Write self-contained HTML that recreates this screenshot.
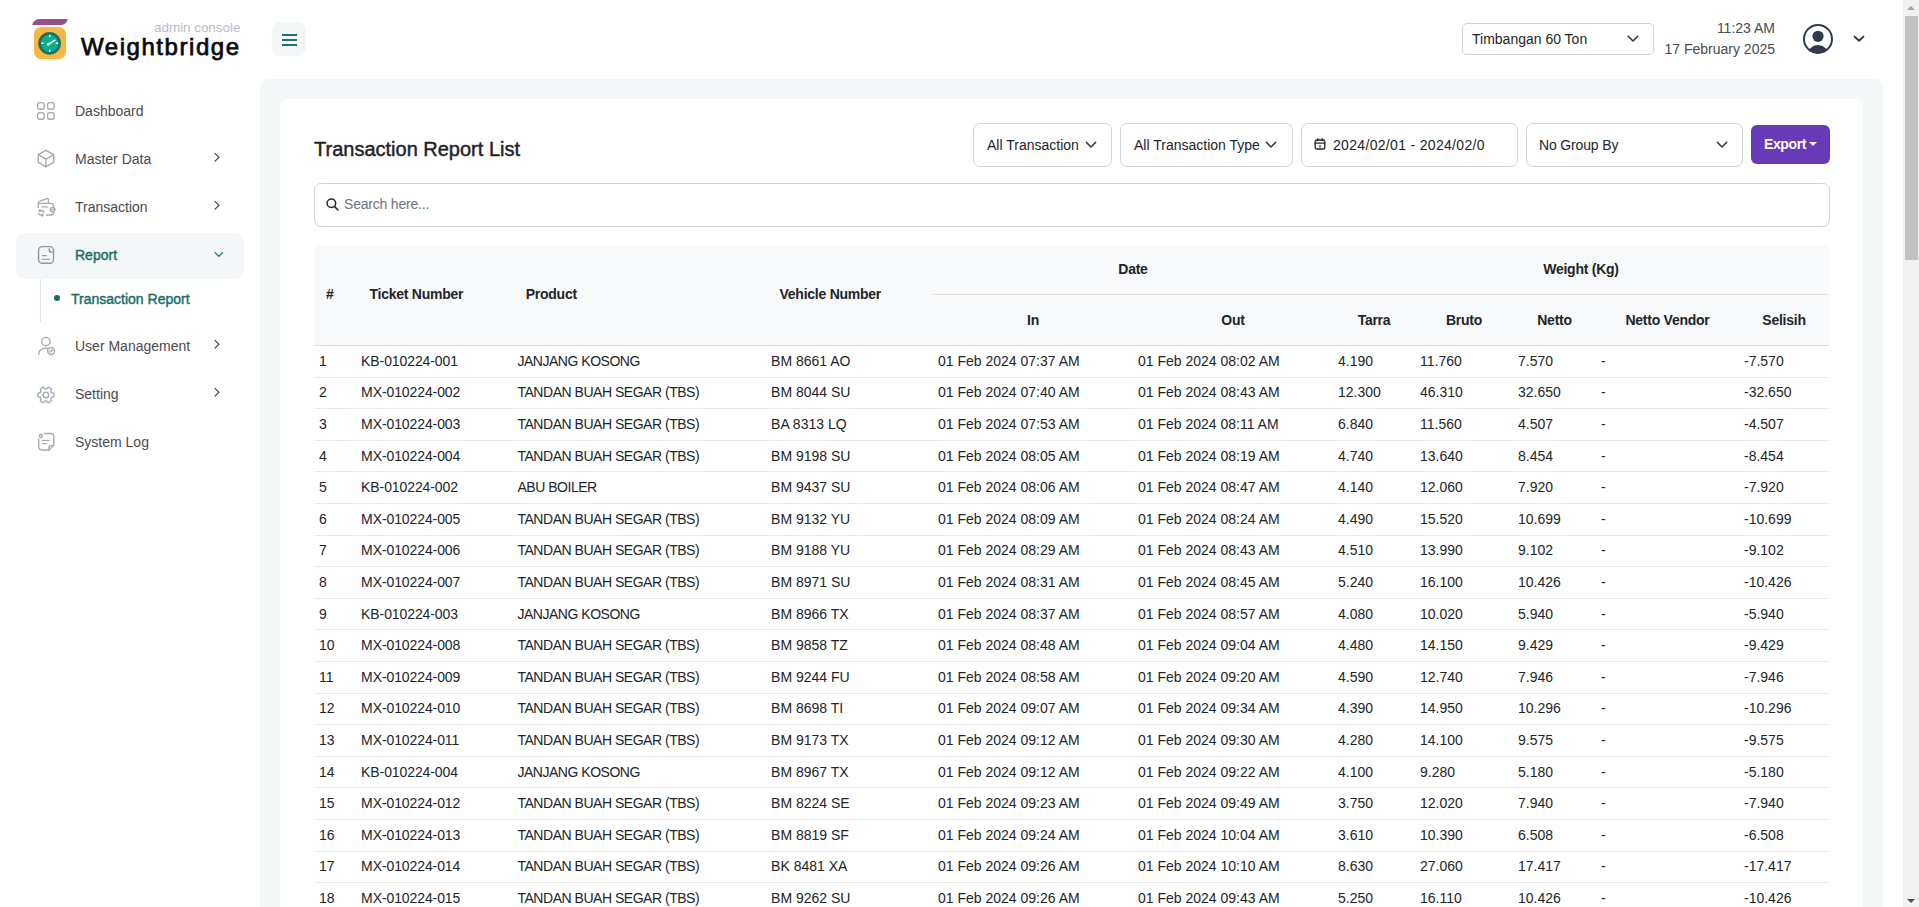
<!DOCTYPE html>
<html><head><meta charset="utf-8">
<style>
*{box-sizing:border-box;margin:0;padding:0}
html,body{width:1919px;height:907px;overflow:hidden;background:#fff}
body{font-family:"Liberation Sans",sans-serif;font-size:14px;color:#212529;position:relative}
.abs{position:absolute}
/* sidebar */
.logo-bar{left:33px;top:19px;width:34px;height:6px;background:#9a4f85;border-radius:6px 1px 6px 1px;transform:skewX(-17deg)}
.logo-sq{left:34px;top:27px;width:32px;height:32px;background:#fbb743;border-radius:7px}
.brand{left:81px;top:33px;font-size:24px;font-weight:400;color:#0b0b0b;letter-spacing:1.55px;white-space:nowrap;-webkit-text-stroke:0.75px #0b0b0b}
.admin{left:154px;top:20px;font-size:13.6px;color:#b7bdc6;white-space:nowrap;letter-spacing:-0.1px}
.hamb{left:272px;top:22px;width:34px;height:34px;background:#f3f7f8;border-radius:8px}
.hamb i{position:absolute;left:10px;width:15px;height:2px;background:#237169}
.nav{left:0;width:260px;height:46px}
.nav .ic{position:absolute;left:37px;top:14px;width:18px;height:18px}
.nav .tx{position:absolute;left:75px;top:14px;font-size:14px;color:#4a4b4e;white-space:nowrap;line-height:18px}
.nav .ch{position:absolute;left:212px;top:17px;width:10px;height:10px}
/* header */
.sel{border:1px solid #ced4da;border-radius:5px;background:#fff}
/* main */
.mainbg{left:260px;top:79px;width:1623px;height:900px;background:#f3f7f8;border-radius:8px}
.card{left:280px;top:99px;width:1583px;height:900px;background:#fff;border-radius:8px}
.title{left:314px;top:138px;font-size:20px;font-weight:400;color:#1f2328;white-space:nowrap;-webkit-text-stroke:0.45px #1f2328}
.fbox{top:123px;height:44px;border:1px solid #ced4da;border-radius:7px;background:#fff}
.fbox .t{position:absolute;top:13px;font-size:14px;color:#212529;white-space:nowrap;line-height:17px}
.export{left:1751px;top:125px;width:79px;height:39px;background:#673ab7;border-radius:6px;color:#fff;font-weight:700}
.search{left:314px;top:183px;width:1516px;height:44px;border:1px solid #ced4da;border-radius:7px}
/* table */
table{position:absolute;left:314px;top:245px;width:1515px;border-collapse:collapse;table-layout:fixed}
th{background:#f8f9fa;font-weight:700;color:#212529;font-size:14px;line-height:21px;letter-spacing:-0.25px}
thead tr.r1 th{height:49px}
thead tr.r2 th{height:51.6px;padding-top:1.6px;border-top:1px solid #dfdfdf}
thead tr.r2{border-bottom:1px solid #dcdcdc}
th.l{text-align:left;padding-left:12px;padding-bottom:1.4px}
th.c{text-align:center}
td{padding:4.8px 0 4.8px 5px;line-height:21px;border-bottom:1px solid #e9e9e9;white-space:nowrap;color:#212529}
td:nth-child(2){padding-left:3.6px;letter-spacing:-0.1px}
td:nth-child(3){padding-left:3.8px;letter-spacing:-0.48px}
td:nth-child(4){padding-left:3.6px}
.sb{left:1903px;top:0;width:16px;height:907px;background:#f1f1f1}
.thumb{left:1905px;top:16px;width:13px;height:244px;background:#c1c1c1}
</style></head><body>

<!-- Sidebar -->
<div class="abs logo-bar"></div>
<div class="abs logo-sq"></div>
<svg class="abs" style="left:34px;top:27px" width="32" height="32" viewBox="0 0 32 32"><circle cx="15.6" cy="16.3" r="10" fill="#0fae8a" stroke="#1b7166" stroke-width="2.8"/><g stroke="#fff" stroke-width="1.6" stroke-linecap="round"><path d="M15.7 8.2 V9.4 M15.7 23.2 V24.3 M7.8 16.3 H8.9 M22.5 16.3 H23.7"/></g><path d="M14 17.6 L21 13.2" stroke="#fff" stroke-width="1.5" stroke-linecap="round"/><circle cx="14.2" cy="17.4" r="1.3" fill="#fff"/></svg>
<div class="abs brand">Weightbridge</div>
<div class="abs admin">admin console</div>
<div class="abs hamb"><i style="top:12px"></i><i style="top:17px"></i><i style="top:22px"></i></div>

<div class="abs nav" style="top:88px"><span class="tx">Dashboard</span></div>
<svg class="abs" style="left:32px;top:97px" width="28" height="28" viewBox="0 0 28 28" fill="none" stroke="#a3abb8" stroke-width="1.4" stroke-linecap="round" stroke-linejoin="round"><rect x="5.6" y="5.6" width="6.6" height="6.6" rx="2.2"/><rect x="15.6" y="5.6" width="6.6" height="6.6" rx="2.2"/><rect x="5.6" y="15.6" width="6.6" height="6.6" rx="2.2"/><rect x="15.6" y="15.6" width="6.6" height="6.6" rx="2.2"/></svg>
<div class="abs nav" style="top:136px"><span class="tx">Master Data</span></div>
<svg class="abs" style="left:32px;top:145px" width="28" height="28" viewBox="0 0 28 28" fill="none" stroke="#a3abb8" stroke-width="1.4" stroke-linecap="round" stroke-linejoin="round"><path d="M13.9 5.3 L21.7 9.7 V17.4 L13.9 21.8 L6.3 17.4 V9.7 Z M6.3 9.7 L13.9 14.1 L21.7 9.7 M13.9 14.1 V21.8"/></svg>
<div class="abs nav" style="top:184px"><span class="tx">Transaction</span></div>
<svg class="abs" style="left:32px;top:193px" width="28" height="28" viewBox="0 0 28 28" fill="none" stroke="#a3abb8" stroke-width="1.4" stroke-linecap="round" stroke-linejoin="round"><path d="M6.3 14.6 V10.2 Q6.3 8.8 7.6 8.3 L14.6 5.6 Q16.4 5.1 16.4 6.8 V10.4"/><path d="M7.6 10.6 Q8.4 10.4 9.5 10.4 H18.6 Q21.6 10.4 21.6 13.6 V14.2"/><path d="M21.6 19.2 Q21.6 22 18.6 22 H14.4"/><path d="M9.8 13.9 H15.6"/><ellipse cx="20.6" cy="16.55" rx="2.3" ry="2.2"/><path d="M19.9 16.55 H22.8"/><path d="M12 19.2 Q11.6 17.7 9.8 17.7 H7 M8 16.7 L7 17.7 L8 18.7"/><path d="M6.7 20.5 Q6.9 22 8.6 22 H11.2 M10.2 21 L11.2 22 L10.2 23"/></svg>
<div class="abs" style="left:16px;top:233px;width:228px;height:46px;background:#f3f7f8;border-radius:8px"></div>
<div class="abs nav" style="top:232px"><span class="tx" style="color:#176d66;font-weight:400;-webkit-text-stroke:0.4px #176d66">Report</span></div>
<svg class="abs" style="left:32px;top:240px" width="28" height="28" viewBox="0 0 28 28" fill="none" stroke="#8d95a3" stroke-width="1.4" stroke-linecap="round" stroke-linejoin="round"><rect x="6.6" y="6.6" width="14.9" height="16.7" rx="3.6"/><path d="M17.2 8.8 V9.9 Q17.2 12 19.3 12 H19.9"/><path d="M10.4 15.6 H14.4 M10.4 19.2 H17.6" stroke-width="1.1"/></svg>
<div class="abs" style="left:40px;top:279px;width:1px;height:43px;background:#dbe6f2"></div>
<div class="abs" style="left:54px;top:295px;width:6px;height:6px;border-radius:50%;background:#176d66"></div>
<div class="abs" style="left:71px;top:290px;font-weight:400;-webkit-text-stroke:0.4px #176d66;color:#176d66;white-space:nowrap;line-height:18px">Transaction Report</div>
<div class="abs nav" style="top:323px"><span class="tx">User Management</span></div>
<svg class="abs" style="left:32px;top:332px" width="28" height="28" viewBox="0 0 28 28" fill="none" stroke="#a3abb8" stroke-width="1.4" stroke-linecap="round" stroke-linejoin="round"><circle cx="13.9" cy="9.6" r="4.2"/><path d="M6.6 22.3 Q7.2 16.3 14 16.3 Q15.2 16.3 16.3 16.6"/><circle cx="19.1" cy="19" r="3.5"/><path d="M17.6 19.1 L18.7 20.1 L20.6 18.1"/></svg>
<div class="abs nav" style="top:371px"><span class="tx">Setting</span></div>
<svg class="abs" style="left:32px;top:380px" width="28" height="28" viewBox="0 0 28 28" fill="none" stroke="#a3abb8" stroke-width="1.4" stroke-linecap="round" stroke-linejoin="round"><path d="M22.00 15.00 L22.00 15.21 L21.99 15.42 L21.98 15.64 L21.96 15.85 L21.93 16.06 L21.90 16.27 L21.86 16.48 L21.80 16.68 L21.63 16.86 L21.37 17.00 L21.04 17.12 L20.67 17.20 L20.28 17.26 L19.92 17.31 L19.61 17.37 L19.38 17.44 L19.23 17.54 L19.16 17.68 L19.09 17.82 L19.01 17.95 L18.93 18.08 L18.85 18.21 L18.77 18.35 L18.75 18.52 L18.80 18.76 L18.91 19.06 L19.05 19.40 L19.19 19.76 L19.30 20.13 L19.37 20.47 L19.37 20.77 L19.30 21.00 L19.16 21.16 L19.00 21.29 L18.83 21.43 L18.66 21.55 L18.49 21.68 L18.31 21.79 L18.13 21.91 L17.95 22.01 L17.76 22.12 L17.58 22.22 L17.39 22.31 L17.19 22.40 L17.00 22.48 L16.80 22.56 L16.60 22.64 L16.40 22.68 L16.16 22.63 L15.90 22.47 L15.64 22.24 L15.38 21.96 L15.13 21.66 L14.91 21.37 L14.71 21.13 L14.53 20.96 L14.36 20.89 L14.21 20.89 L14.05 20.90 L13.90 20.90 L13.75 20.90 L13.59 20.89 L13.44 20.89 L13.27 20.96 L13.09 21.13 L12.89 21.37 L12.67 21.66 L12.42 21.96 L12.16 22.24 L11.90 22.47 L11.64 22.63 L11.40 22.68 L11.20 22.64 L11.00 22.56 L10.80 22.48 L10.61 22.40 L10.41 22.31 L10.22 22.22 L10.04 22.12 L9.85 22.01 L9.67 21.91 L9.49 21.79 L9.31 21.68 L9.14 21.55 L8.97 21.43 L8.80 21.29 L8.64 21.16 L8.50 21.00 L8.43 20.77 L8.43 20.47 L8.50 20.13 L8.61 19.76 L8.75 19.40 L8.89 19.06 L9.00 18.76 L9.05 18.52 L9.03 18.35 L8.95 18.21 L8.87 18.08 L8.79 17.95 L8.71 17.82 L8.64 17.68 L8.57 17.54 L8.42 17.44 L8.19 17.37 L7.88 17.31 L7.52 17.26 L7.13 17.20 L6.76 17.12 L6.43 17.00 L6.17 16.86 L6.00 16.68 L5.94 16.48 L5.90 16.27 L5.87 16.06 L5.84 15.85 L5.82 15.64 L5.81 15.42 L5.80 15.21 L5.80 15.00 L5.80 14.79 L5.81 14.58 L5.82 14.36 L5.84 14.15 L5.87 13.94 L5.90 13.73 L5.94 13.52 L6.00 13.32 L6.17 13.14 L6.43 13.00 L6.76 12.88 L7.13 12.80 L7.52 12.74 L7.88 12.69 L8.19 12.63 L8.42 12.56 L8.57 12.46 L8.64 12.32 L8.71 12.18 L8.79 12.05 L8.87 11.92 L8.95 11.79 L9.03 11.65 L9.05 11.48 L9.00 11.24 L8.89 10.94 L8.75 10.60 L8.61 10.24 L8.50 9.87 L8.43 9.53 L8.43 9.23 L8.50 9.00 L8.64 8.84 L8.80 8.71 L8.97 8.57 L9.14 8.45 L9.31 8.32 L9.49 8.21 L9.67 8.09 L9.85 7.99 L10.04 7.88 L10.22 7.78 L10.41 7.69 L10.61 7.60 L10.80 7.52 L11.00 7.44 L11.20 7.36 L11.40 7.32 L11.64 7.37 L11.90 7.53 L12.16 7.76 L12.42 8.04 L12.67 8.34 L12.89 8.63 L13.09 8.87 L13.27 9.04 L13.44 9.11 L13.59 9.11 L13.75 9.10 L13.90 9.10 L14.05 9.10 L14.21 9.11 L14.36 9.11 L14.53 9.04 L14.71 8.87 L14.91 8.63 L15.13 8.34 L15.38 8.04 L15.64 7.76 L15.90 7.53 L16.16 7.37 L16.40 7.32 L16.60 7.36 L16.80 7.44 L17.00 7.52 L17.19 7.60 L17.39 7.69 L17.58 7.78 L17.76 7.88 L17.95 7.99 L18.13 8.09 L18.31 8.21 L18.49 8.32 L18.66 8.45 L18.83 8.57 L19.00 8.71 L19.16 8.84 L19.30 9.00 L19.37 9.23 L19.37 9.53 L19.30 9.87 L19.19 10.24 L19.05 10.60 L18.91 10.94 L18.80 11.24 L18.75 11.48 L18.77 11.65 L18.85 11.79 L18.93 11.92 L19.01 12.05 L19.09 12.18 L19.16 12.32 L19.23 12.46 L19.38 12.56 L19.61 12.63 L19.92 12.69 L20.28 12.74 L20.67 12.80 L21.04 12.88 L21.37 13.00 L21.63 13.14 L21.80 13.32 L21.86 13.52 L21.90 13.73 L21.93 13.94 L21.96 14.15 L21.98 14.36 L21.99 14.58 L22.00 14.79 Z"/><circle cx="13.9" cy="15.0" r="2.8"/></svg>
<div class="abs nav" style="top:419px"><span class="tx">System Log</span></div>
<svg class="abs" style="left:32px;top:428px" width="28" height="28" viewBox="0 0 28 28" fill="none" stroke="#a3abb8" stroke-width="1.4" stroke-linecap="round" stroke-linejoin="round"><path d="M12.4 5.5 H18.4 Q21.8 5.5 21.8 9 V17.3 L17 22 H10 Q6.7 22 6.7 18.6 V11.3"/><path d="M17 22 V19.6 Q17 17.4 19.2 17.4 H21.6"/><circle cx="8.9" cy="8" r="1.5"/><path d="M10.3 12.4 H17 M10.3 15.6 H14.6"/></svg>

<svg class="abs" style="left:205px;top:148px" width="24" height="20" viewBox="0 0 24 20" fill="none" stroke="#3a3f47" stroke-width="1.15" stroke-linecap="round" stroke-linejoin="round"><path d="M10 5.4 L14 9.3 L10 13.2"/></svg>
<svg class="abs" style="left:205px;top:196px" width="24" height="20" viewBox="0 0 24 20" fill="none" stroke="#3a3f47" stroke-width="1.15" stroke-linecap="round" stroke-linejoin="round"><path d="M10 5.4 L14 9.3 L10 13.2"/></svg>
<svg class="abs" style="left:205px;top:335px" width="24" height="20" viewBox="0 0 24 20" fill="none" stroke="#3a3f47" stroke-width="1.15" stroke-linecap="round" stroke-linejoin="round"><path d="M10 5.4 L14 9.3 L10 13.2"/></svg>
<svg class="abs" style="left:205px;top:383px" width="24" height="20" viewBox="0 0 24 20" fill="none" stroke="#3a3f47" stroke-width="1.15" stroke-linecap="round" stroke-linejoin="round"><path d="M10 5.4 L14 9.3 L10 13.2"/></svg>
<svg class="abs" style="left:205px;top:245px" width="24" height="20" viewBox="0 0 24 20" fill="none" stroke="#176d66" stroke-width="1.2" stroke-linecap="round" stroke-linejoin="round"><path d="M10 7.6 L13.8 11.4 L17.6 7.6"/></svg>
<!-- Header right -->
<div class="abs sel" style="left:1462px;top:23px;width:192px;height:32px"></div>
<div class="abs" style="left:1472px;top:31px;white-space:nowrap;line-height:17px">Timbangan 60 Ton</div>
<div class="abs" style="left:1660px;top:19px;width:115px;text-align:right;color:#4a4b4e;line-height:18px">11:23 AM</div>
<div class="abs" style="left:1640px;top:40px;width:135px;text-align:right;color:#4a4b4e;line-height:18px;white-space:nowrap">17 February 2025</div>

<svg class="abs" style="left:1620px;top:30px" width="24" height="18" viewBox="0 0 24 18" fill="none" stroke="#343a40" stroke-width="1.6" stroke-linecap="round" stroke-linejoin="round"><path d="M8.2 6.2 L13 11 L17.8 6.2"/></svg>
<svg class="abs" style="left:1800px;top:22px" width="36" height="34" viewBox="0 0 36 34"><defs><clipPath id="av"><circle cx="18" cy="17" r="14"/></clipPath></defs><circle cx="18" cy="17" r="14" fill="none" stroke="#2e3b4e" stroke-width="2"/><circle cx="18" cy="14.3" r="5.6" fill="#2e3b4e"/><ellipse cx="18" cy="33.5" rx="10.8" ry="10.4" fill="#2e3b4e" clip-path="url(#av)"/></svg>
<svg class="abs" style="left:1846px;top:30px" width="24" height="18" viewBox="0 0 24 18" fill="none" stroke="#2e3b4e" stroke-width="2" stroke-linecap="round" stroke-linejoin="round"><path d="M8.6 6.6 L13 10.8 L17.4 6.6"/></svg>
<!-- Main -->
<div class="abs mainbg"></div>
<div class="abs card"></div>
<div class="abs title">Transaction Report List</div>
<div class="abs fbox" style="left:973px;width:139px"><span class="t" style="left:13px">All Transaction</span></div>
<div class="abs fbox" style="left:1120px;width:173px"><span class="t" style="left:13px">All Transaction Type</span></div>
<div class="abs fbox" style="left:1301px;width:217px"><span class="t" style="left:31px;letter-spacing:0.32px">2024/02/01 - 2024/02/0</span></div>
<div class="abs fbox" style="left:1526px;width:217px"><span class="t" style="left:12px;letter-spacing:-0.15px">No Group By</span></div>
<div class="abs export"></div>
<div class="abs search"></div>
<svg class="abs" style="left:1080px;top:136px" width="24" height="18" viewBox="0 0 24 18" fill="none" stroke="#343a40" stroke-width="1.5" stroke-linecap="round" stroke-linejoin="round"><path d="M6.4 6.4 L11 11 L15.6 6.4"/></svg>
<svg class="abs" style="left:1260px;top:136px" width="24" height="18" viewBox="0 0 24 18" fill="none" stroke="#343a40" stroke-width="1.5" stroke-linecap="round" stroke-linejoin="round"><path d="M6.4 6.4 L11 11 L15.6 6.4"/></svg>
<svg class="abs" style="left:1711px;top:136px" width="24" height="18" viewBox="0 0 24 18" fill="none" stroke="#343a40" stroke-width="1.5" stroke-linecap="round" stroke-linejoin="round"><path d="M6.4 6.4 L11 11 L15.6 6.4"/></svg>
<svg class="abs" style="left:1312px;top:136px" width="16" height="16" viewBox="0 0 16 16" fill="none" stroke="#212529" stroke-width="1.3" stroke-linecap="round"><rect x="3.2" y="4" width="9.6" height="9" rx="1.6"/><path d="M3.2 7.2 H12.8 M5.8 2.6 V4.6 M10.2 2.6 V4.6 M8 9.6 V11"/></svg>
<div class="abs" style="left:1764px;top:136px;color:#fff;font-weight:700;font-size:14px;line-height:17px;letter-spacing:-0.4px">Export</div>
<div class="abs" style="left:1809px;top:142px;width:0;height:0;border-left:4px solid transparent;border-right:4px solid transparent;border-top:4.5px solid #fff"></div>
<svg class="abs" style="left:324px;top:196px" width="16" height="16" viewBox="0 0 16 16" fill="none" stroke="#212529" stroke-width="1.5" stroke-linecap="round"><circle cx="7.4" cy="7.3" r="4.3"/><path d="M10.6 10.6 L14 14"/></svg>
<div class="abs" style="left:344px;top:196px;color:#6c757d;line-height:17px;letter-spacing:-0.2px">Search here...</div>


<table>
<colgroup><col style="width:43.5px"><col style="width:156.2px"><col style="width:253.8px"><col style="width:165.5px"><col style="width:200px"><col style="width:200px"><col style="width:82px"><col style="width:98px"><col style="width:83px"><col style="width:143px"><col></colgroup>
<thead><tr class="r1"><th rowspan="2" class="l">#</th><th rowspan="2" class="l">Ticket Number</th><th rowspan="2" class="l">Product</th><th rowspan="2" class="l">Vehicle Number</th><th colspan="2" class="c">Date</th><th colspan="5" class="c">Weight (Kg)</th></tr>
<tr class="r2"><th class="c">In</th><th class="c">Out</th><th class="c">Tarra</th><th class="c">Bruto</th><th class="c">Netto</th><th class="c">Netto Vendor</th><th class="c">Selisih</th></tr></thead><tbody>
<tr><td>1</td><td>KB-010224-001</td><td>JANJANG KOSONG</td><td>BM 8661 AO</td><td>01 Feb 2024 07:37 AM</td><td>01 Feb 2024 08:02 AM</td><td>4.190</td><td>11.760</td><td>7.570</td><td>-</td><td>-7.570</td></tr>
<tr><td>2</td><td>MX-010224-002</td><td>TANDAN BUAH SEGAR (TBS)</td><td>BM 8044 SU</td><td>01 Feb 2024 07:40 AM</td><td>01 Feb 2024 08:43 AM</td><td>12.300</td><td>46.310</td><td>32.650</td><td>-</td><td>-32.650</td></tr>
<tr><td>3</td><td>MX-010224-003</td><td>TANDAN BUAH SEGAR (TBS)</td><td>BA 8313 LQ</td><td>01 Feb 2024 07:53 AM</td><td>01 Feb 2024 08:11 AM</td><td>6.840</td><td>11.560</td><td>4.507</td><td>-</td><td>-4.507</td></tr>
<tr><td>4</td><td>MX-010224-004</td><td>TANDAN BUAH SEGAR (TBS)</td><td>BM 9198 SU</td><td>01 Feb 2024 08:05 AM</td><td>01 Feb 2024 08:19 AM</td><td>4.740</td><td>13.640</td><td>8.454</td><td>-</td><td>-8.454</td></tr>
<tr><td>5</td><td>KB-010224-002</td><td>ABU BOILER</td><td>BM 9437 SU</td><td>01 Feb 2024 08:06 AM</td><td>01 Feb 2024 08:47 AM</td><td>4.140</td><td>12.060</td><td>7.920</td><td>-</td><td>-7.920</td></tr>
<tr><td>6</td><td>MX-010224-005</td><td>TANDAN BUAH SEGAR (TBS)</td><td>BM 9132 YU</td><td>01 Feb 2024 08:09 AM</td><td>01 Feb 2024 08:24 AM</td><td>4.490</td><td>15.520</td><td>10.699</td><td>-</td><td>-10.699</td></tr>
<tr><td>7</td><td>MX-010224-006</td><td>TANDAN BUAH SEGAR (TBS)</td><td>BM 9188 YU</td><td>01 Feb 2024 08:29 AM</td><td>01 Feb 2024 08:43 AM</td><td>4.510</td><td>13.990</td><td>9.102</td><td>-</td><td>-9.102</td></tr>
<tr><td>8</td><td>MX-010224-007</td><td>TANDAN BUAH SEGAR (TBS)</td><td>BM 8971 SU</td><td>01 Feb 2024 08:31 AM</td><td>01 Feb 2024 08:45 AM</td><td>5.240</td><td>16.100</td><td>10.426</td><td>-</td><td>-10.426</td></tr>
<tr><td>9</td><td>KB-010224-003</td><td>JANJANG KOSONG</td><td>BM 8966 TX</td><td>01 Feb 2024 08:37 AM</td><td>01 Feb 2024 08:57 AM</td><td>4.080</td><td>10.020</td><td>5.940</td><td>-</td><td>-5.940</td></tr>
<tr><td>10</td><td>MX-010224-008</td><td>TANDAN BUAH SEGAR (TBS)</td><td>BM 9858 TZ</td><td>01 Feb 2024 08:48 AM</td><td>01 Feb 2024 09:04 AM</td><td>4.480</td><td>14.150</td><td>9.429</td><td>-</td><td>-9.429</td></tr>
<tr><td>11</td><td>MX-010224-009</td><td>TANDAN BUAH SEGAR (TBS)</td><td>BM 9244 FU</td><td>01 Feb 2024 08:58 AM</td><td>01 Feb 2024 09:20 AM</td><td>4.590</td><td>12.740</td><td>7.946</td><td>-</td><td>-7.946</td></tr>
<tr><td>12</td><td>MX-010224-010</td><td>TANDAN BUAH SEGAR (TBS)</td><td>BM 8698 TI</td><td>01 Feb 2024 09:07 AM</td><td>01 Feb 2024 09:34 AM</td><td>4.390</td><td>14.950</td><td>10.296</td><td>-</td><td>-10.296</td></tr>
<tr><td>13</td><td>MX-010224-011</td><td>TANDAN BUAH SEGAR (TBS)</td><td>BM 9173 TX</td><td>01 Feb 2024 09:12 AM</td><td>01 Feb 2024 09:30 AM</td><td>4.280</td><td>14.100</td><td>9.575</td><td>-</td><td>-9.575</td></tr>
<tr><td>14</td><td>KB-010224-004</td><td>JANJANG KOSONG</td><td>BM 8967 TX</td><td>01 Feb 2024 09:12 AM</td><td>01 Feb 2024 09:22 AM</td><td>4.100</td><td>9.280</td><td>5.180</td><td>-</td><td>-5.180</td></tr>
<tr><td>15</td><td>MX-010224-012</td><td>TANDAN BUAH SEGAR (TBS)</td><td>BM 8224 SE</td><td>01 Feb 2024 09:23 AM</td><td>01 Feb 2024 09:49 AM</td><td>3.750</td><td>12.020</td><td>7.940</td><td>-</td><td>-7.940</td></tr>
<tr><td>16</td><td>MX-010224-013</td><td>TANDAN BUAH SEGAR (TBS)</td><td>BM 8819 SF</td><td>01 Feb 2024 09:24 AM</td><td>01 Feb 2024 10:04 AM</td><td>3.610</td><td>10.390</td><td>6.508</td><td>-</td><td>-6.508</td></tr>
<tr><td>17</td><td>MX-010224-014</td><td>TANDAN BUAH SEGAR (TBS)</td><td>BK 8481 XA</td><td>01 Feb 2024 09:26 AM</td><td>01 Feb 2024 10:10 AM</td><td>8.630</td><td>27.060</td><td>17.417</td><td>-</td><td>-17.417</td></tr>
<tr><td>18</td><td>MX-010224-015</td><td>TANDAN BUAH SEGAR (TBS)</td><td>BM 9262 SU</td><td>01 Feb 2024 09:26 AM</td><td>01 Feb 2024 09:43 AM</td><td>5.250</td><td>16.110</td><td>10.426</td><td>-</td><td>-10.426</td></tr>
</tbody></table>

<div class="abs sb"></div>
<div class="abs thumb"></div>
<div class="abs" style="left:1907px;top:6px;width:0;height:0;border-left:4px solid transparent;border-right:4px solid transparent;border-bottom:4.5px solid #a3a3a3"></div>
<div class="abs" style="left:1907px;top:899px;width:0;height:0;border-left:4px solid transparent;border-right:4px solid transparent;border-top:4.5px solid #505050"></div>
</body></html>
